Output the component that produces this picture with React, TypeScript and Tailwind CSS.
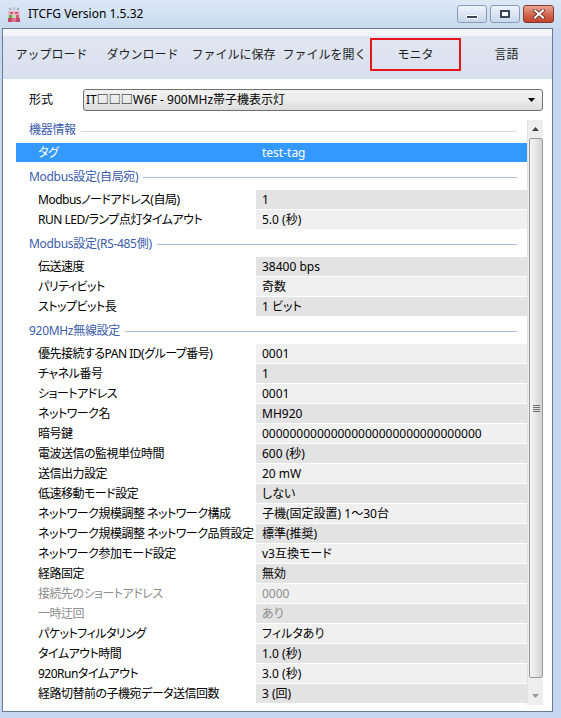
import React from "react";

type Row = { label: string; value: string; disabled?: boolean; selected?: boolean };
type Section = { title: string; rows: Row[]; first?: boolean };

const sections: Section[] = [
  { title: "機器情報", first: true, rows: [{ label: "タグ", value: "test-tag", selected: true }] },
  {
    title: "Modbus設定(自局宛)",
    rows: [
      { label: "Modbusノードアドレス(自局)", value: "1" },
      { label: "RUN LED/ランプ点灯タイムアウト", value: "5.0 (秒)" },
    ],
  },
  {
    title: "Modbus設定(RS-485側)",
    rows: [
      { label: "伝送速度", value: "38400 bps" },
      { label: "パリティビット", value: "奇数" },
      { label: "ストップビット長", value: "1 ビット" },
    ],
  },
  {
    title: "920MHz無線設定",
    rows: [
      { label: "優先接続するPAN ID(グループ番号)", value: "0001" },
      { label: "チャネル番号", value: "1" },
      { label: "ショートアドレス", value: "0001" },
      { label: "ネットワーク名", value: "MH920" },
      { label: "暗号鍵", value: "00000000000000000000000000000000" },
      { label: "電波送信の監視単位時間", value: "600 (秒)" },
      { label: "送信出力設定", value: "20 mW" },
      { label: "低速移動モード設定", value: "しない" },
      { label: "ネットワーク規模調整 ネットワーク構成", value: "子機(固定設置) 1〜30台" },
      { label: "ネットワーク規模調整 ネットワーク品質設定", value: "標準(推奨)" },
      { label: "ネットワーク参加モード設定", value: "v3互換モード" },
      { label: "経路固定", value: "無効" },
      { label: "接続先のショートアドレス", value: "0000", disabled: true },
      { label: "一時迂回", value: "あり", disabled: true },
      { label: "パケットフィルタリング", value: "フィルタあり" },
      { label: "タイムアウト時間", value: "1.0 (秒)" },
      { label: "920Runタイムアウト", value: "3.0 (秒)" },
      { label: "経路切替前の子機宛データ送信回数", value: "3 (回)" },
    ],
  },
];

const FONT = "font-['Noto_Sans','Noto_Sans_CJK_JP',sans-serif]";

function TitleIcon() {
  return (
    <svg width="12" height="15" viewBox="0 0 12 15" className="shrink-0">
      <rect x="0" y="0" width="12" height="4" fill="#d7dde6" />
      <rect x="1" y="1" width="2" height="2" fill="#9fb0c4" />
      <rect x="5" y="0" width="2" height="3" fill="#b8c6d6" />
      <rect x="9" y="1" width="2" height="2" fill="#9fb0c4" />
      <rect x="0" y="4" width="12" height="4" fill="#e9b8c8" />
      <rect x="2" y="5" width="3" height="2" fill="#d0587a" />
      <rect x="7" y="5" width="3" height="2" fill="#d0587a" />
      <rect x="0" y="8" width="12" height="3" fill="#c9d9b8" />
      <rect x="1" y="8" width="3" height="3" fill="#5fa84c" />
      <rect x="8" y="8" width="3" height="3" fill="#d0587a" />
      <rect x="0" y="11" width="12" height="4" fill="#c04a6c" />
      <rect x="4" y="11" width="4" height="4" fill="#e07090" />
    </svg>
  );
}

function CaptionButtons() {
  return (
    <div className="ml-auto mr-[7px] mt-[5px] self-start flex gap-[3px]">
      <div className="w-[30px] h-[18px] rounded-[3px] border border-[#8a9bb5] bg-gradient-to-b from-[#eef3fa] to-[#c9d7ea] flex items-end justify-center pb-[3px]">
        <div className="w-[12px] h-[4px] bg-[#3a4658] border border-white rounded-[1px]" />
      </div>
      <div className="w-[30px] h-[18px] rounded-[3px] border border-[#8a9bb5] bg-gradient-to-b from-[#eef3fa] to-[#c9d7ea] flex items-center justify-center">
        <div className="w-[10px] h-[8px] border-2 border-[#3a4658] bg-white" />
      </div>
      <div className="w-[31px] h-[18px] rounded-[3px] border border-[#8b3a2c] bg-gradient-to-b from-[#eaa794] via-[#d46a52] to-[#c2432d] flex items-center justify-center">
        <svg width="12" height="10" viewBox="0 0 12 10">
          <path d="M2 1.5 L10 8.5 M10 1.5 L2 8.5" stroke="#5a2a22" strokeWidth="3.6" strokeLinecap="square" />
          <path d="M2 1.5 L10 8.5 M10 1.5 L2 8.5" stroke="#ffffff" strokeWidth="2" strokeLinecap="square" />
        </svg>
      </div>
    </div>
  );
}

function Toolbar() {
  const items = ["アップロード", "ダウンロード", "ファイルに保存", "ファイルを開く", "モニタ", "言語"];
  return (
    <div className="h-[43px] bg-gradient-to-b from-[#e0e6f1] to-[#d9e0ed] grid grid-cols-6 pl-[3px]">
      {items.map((t) =>
        t === "モニタ" ? (
          <div
            key={t}
            className="mt-[2px] h-[33px] border-2 border-[#e8141b] flex items-center justify-center text-[12px] text-[#1e1e1e]"
          >
            {t}
          </div>
        ) : (
          <div key={t} className="mt-[2px] h-[33px] flex items-center justify-center text-[12px] text-[#1e1e1e] whitespace-nowrap">
            {t}
          </div>
        )
      )}
    </div>
  );
}

function Combo() {
  return (
    <div className="flex items-center h-[22px] mt-[10px]">
      <span className="pl-[26px] w-[80px] text-[12px] text-black">形式</span>
      <div className="w-[460px] h-[22px] rounded-[3px] border border-[#707070] bg-gradient-to-b from-[#f3f3f3] via-[#ebebeb] to-[#dcdcdc] flex items-center pl-[2px] pr-[7px]">
        <span className="text-[12px] text-black flex-1 [font-feature-settings:'palt']">IT□□□W6F - 900MHz帯子機表示灯</span>
        <svg width="7" height="4" viewBox="0 0 7 4">
          <path d="M0 0 H7 L3.5 4 Z" fill="#000" />
        </svg>
      </div>
    </div>
  );
}

function Header({ title, first }: { title: string; first?: boolean }) {
  return (
    <div className={first ? "h-[23px]" : "h-[27px] flex items-center"}>
      <div className="h-[20px] flex items-center pl-[13px] pr-[10px] gap-[5px] w-full">
        <span className="text-[12px] text-[#3b5bab] whitespace-nowrap tracking-[-0.3px]">{title}</span>
        <div className={first ? "flex-1 h-px bg-[#d3dbe8] mt-[2px]" : "flex-1 h-px bg-[#aabddd] mt-[2px]"} />
      </div>
    </div>
  );
}

function GridRow({ row, idx }: { row: Row; idx: number }) {
  if (row.selected) {
    return (
      <div className="h-[20px] pb-[1px]">
        <div className="h-[19px] bg-[#3399ff] flex items-center text-white text-[12px]">
          <div className="w-[240px] pl-[22px] tracking-[-0.5px]">{row.label}</div>
          <div className="pl-[6px]">{row.value}</div>
        </div>
      </div>
    );
  }
  const dark = idx % 2 === 1;
  const textColor = row.disabled ? "text-[#8d8d8d]" : "text-black";
  return (
    <div className="h-[20px] pb-[1px] flex">
      <div className={`w-[240px] pl-[22px] flex items-center text-[12px] tracking-[-0.5px] whitespace-nowrap overflow-hidden ${textColor}`}>
        {row.label}
      </div>
      <div
        className={`flex-1 pl-[6px] flex items-center text-[12px] whitespace-nowrap ${textColor} ${
          dark ? "bg-[#e3e3e3]" : "bg-[#f0f0f0]"
        }`}
      >
        {row.value}
      </div>
    </div>
  );
}

function Scrollbar() {
  return (
    <div className="w-[16px] bg-[#eeeeee] border-l border-[#e2e2e2] flex flex-col">
      <div className="h-[17px] flex items-center justify-center">
        <svg width="7" height="4" viewBox="0 0 7 4">
          <path d="M0 4 H7 L3.5 0 Z" fill="#404040" />
        </svg>
      </div>
      <div className="ml-[1px] mr-0 mt-[1px] h-[540px] rounded-[2px] border border-[#999999] bg-gradient-to-r from-[#f4f4f4] via-[#e6e6e6] to-[#d3d3d3] flex items-center justify-center">
        <div className="flex flex-col gap-[1px]">
          <div className="w-[7px] h-px bg-[#6f6f6f]" />
          <div className="w-[7px] h-px bg-[#6f6f6f]" />
          <div className="w-[7px] h-px bg-[#6f6f6f]" />
          <div className="w-[7px] h-px bg-[#6f6f6f]" />
        </div>
      </div>
      <div className="flex-1" />
      <div className="h-[18px] flex items-center justify-center">
        <svg width="7" height="4" viewBox="0 0 7 4">
          <path d="M0 0 H7 L3.5 4 Z" fill="#9a9a9a" />
        </svg>
      </div>
    </div>
  );
}

function PropertyGrid() {
  let idx = 0;
  return (
    <div className="ml-[13px] mt-[9px] w-[527px] h-[585px] flex bg-white">
      <div className="w-[511px] flex flex-col [font-feature-settings:'palt']">
        {sections.map((s) => (
          <React.Fragment key={s.title}>
            <Header title={s.title} first={s.first} />
            {s.rows.map((r) => {
              const i = idx++;
              return <GridRow key={r.label} row={r} idx={i} />;
            })}
          </React.Fragment>
        ))}
      </div>
      <Scrollbar />
    </div>
  );
}

export default function App() {
  return (
    <div className={`w-[561px] h-[718px] overflow-hidden bg-[#c6d8ef] flex flex-col ${FONT}`}>
      <div className="h-[28px] flex items-center bg-gradient-to-b from-[#dce8f6] to-[#c9dbf0]">
        <div className="ml-[8px] mt-[1px]">
          <TitleIcon />
        </div>
        <span className="ml-[8px] text-[12px] text-black font-['Noto_Sans',sans-serif]">ITCFG Version 1.5.32</span>
        <CaptionButtons />
      </div>
      <div className="ml-[2px] mr-[8px] h-[684px] border border-[#6c7b93] bg-white flex flex-col">
        <div className="h-[7px] bg-[#f3f5f9]" />
        <Toolbar />
        <Combo />
        <PropertyGrid />
      </div>
    </div>
  );
}
